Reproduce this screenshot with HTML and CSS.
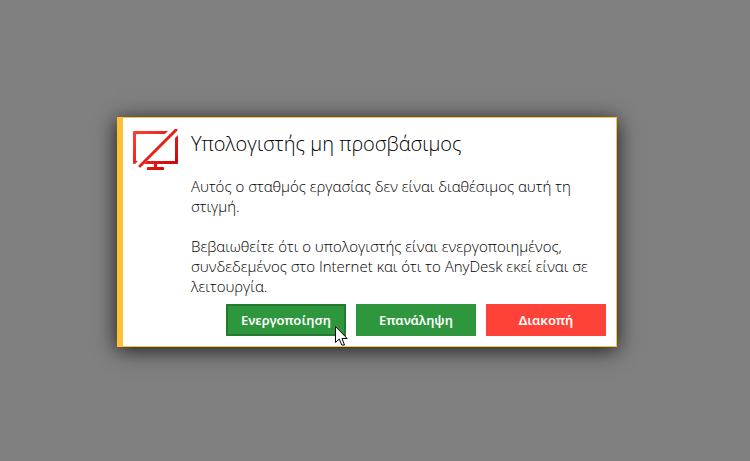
FILE: index.html
```
<!DOCTYPE html>
<html lang="el">
<head>
    <meta charset="UTF-8">
    <meta name="viewport" content="width=device-width, initial-scale=1.0">
    <title>AnyDesk</title>
    <link rel="stylesheet" href="styles.css">
</head>
<body>
    <div class="dialog" role="alertdialog" aria-labelledby="dialog-title" aria-describedby="dialog-message">
        <svg class="dialog-icon" width="46" height="42" viewBox="0 0 46 42" aria-hidden="true">
            <defs>
                <linearGradient id="red" x1="0" y1="0" x2="46" y2="42" gradientUnits="userSpaceOnUse">
                    <stop offset="0" stop-color="#ff443a"/>
                    <stop offset="1" stop-color="#c80000"/>
                </linearGradient>
            </defs>
            <g fill="url(#red)">
                <path d="M1 2H35L32 5H3V32H5L2 35H1Q0 35 0 34V3Q0 2 1 2Z"/>
                <path d="M45 6V34Q45 35 44 35H24V38H30Q31 38 31 39V41H14V39Q14 38 15 38H21V35H11L14 32H42V9Z"/>
            </g>
            <path d="M7 37L43 1" stroke="url(#red)" stroke-width="3" stroke-linecap="round"/>
        </svg>
        <div class="dialog-content">
            <h1 id="dialog-title">Υπολογιστής μη προσβάσιμος</h1>
            <div id="dialog-message">
                <p>Αυτός ο σταθμός εργασίας δεν είναι διαθέσιμος αυτή τη στιγμή.</p>
                <p>Βεβαιωθείτε ότι ο υπολογιστής είναι ενεργοποιημένος, συνδεδεμένος στο Internet και ότι το AnyDesk εκεί είναι σε λειτουργία.</p>
            </div>
        </div>
        <div class="dialog-buttons">
            <button type="button" class="active">
                Ενεργοποίηση
                <svg class="cursor" width="13" height="20" viewBox="0 0 13 20" aria-hidden="true">
                    <path d="M.5 .5V16.5L4.2 13L6.8 19H9.5L7 12.5H12.2Z" fill="#fff" stroke="#000"/>
                </svg>
            </button>
            <button type="button">Επανάληψη</button>
            <button type="button" class="cancel">Διακοπή</button>
        </div>
    </div>
</body>
</html>
```
FILE: styles.css
```
* {
    box-sizing: border-box;
}
body {
    background-color: #808080;
    color: #000;
    font-family: "Open Sans", "Noto Sans", sans-serif;
    font-size: 15px;
    font-weight: 300;
    line-height: 20px;
    display: flex;
    justify-content: center;
    align-items: center;
    min-height: 100vh;
    margin: 0;
    padding: 3px 16px 0 0;
}
.dialog {
    display: grid;
    grid-template-columns: 46px 1fr;
    column-gap: 22px;
    width: 100%;
    max-width: 500px;
    padding: 10px;
    background-color: #fff;
    border: 1px solid #ffc133;
    border-left-width: 6px;
    box-shadow: 0 3px 20px rgba(0, 0, 0, 0.8);
}
.dialog-icon {
    margin-top: 1px;
}
.dialog-content {
    margin-left: -10px;
}
h1 {
    font-size: 20px;
    font-weight: 400;
    line-height: 32px;
    margin: 0 0 16px;
}
h1, p {
    font-weight: 300;
}
p {
    margin: 0 0 20px;
}
p:last-child {
    margin-bottom: 8px;
}
.dialog-buttons {
    grid-column: 1 / -1;
    display: flex;
    justify-content: flex-end;
    gap: 10px;
}
button {
    position: relative;
    width: 120px;
    height: 32px;
    padding: 0;
    background-color: #2e973d;
    color: #fff;
    border: 2px solid #2e973d;
    font-family: "Noto Sans", "Open Sans", sans-serif;
    font-size: 13px;
    font-weight: 600;
}
button.active {
    border-color: #237a30;
}
button.cancel {
    background-color: #ff4238;
    border-color: #ff4238;
}
.cursor {
    position: absolute;
    right: -4px;
    bottom: -12px;
}
```
